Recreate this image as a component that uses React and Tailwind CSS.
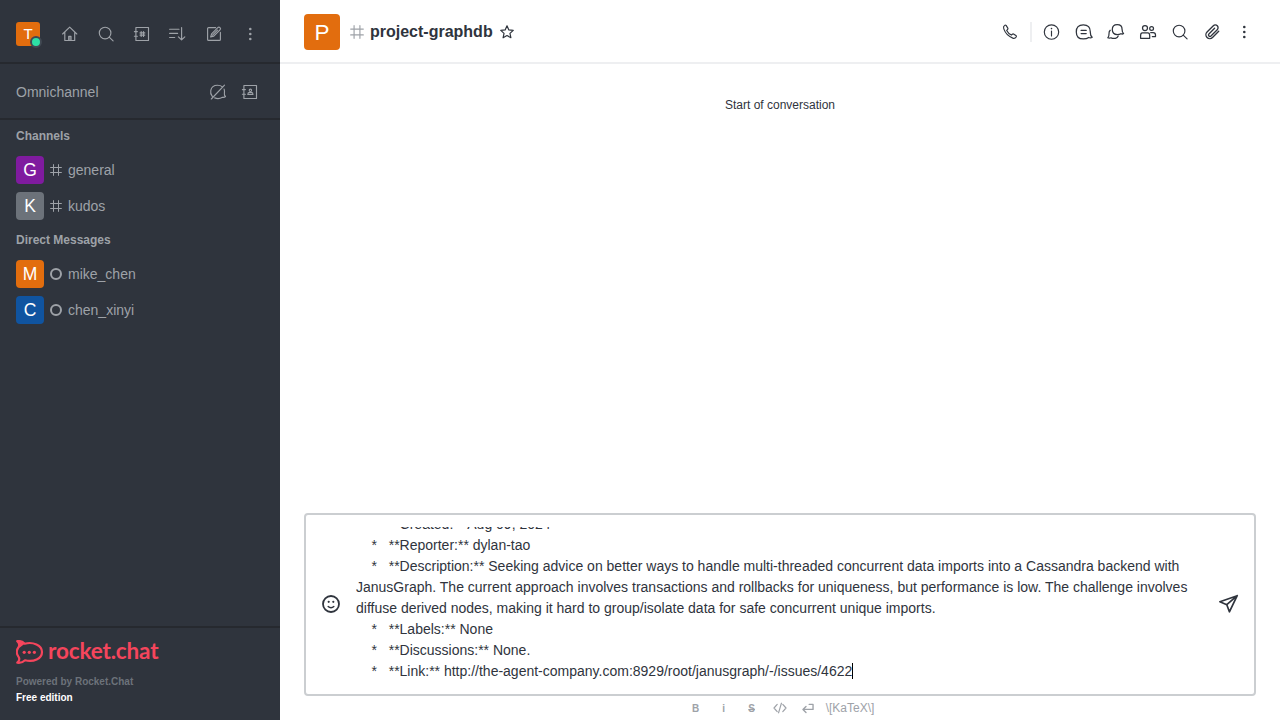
import React from 'react';

function Icon({ children, className = 'size-5', width = 1.15 }) {
  return (
    <svg viewBox="0 0 20 20" className={`${className} block shrink-0`} fill="none" stroke="currentColor" strokeWidth={width} strokeLinecap="round" strokeLinejoin="round">
      {children}
    </svg>
  );
}

const HomeIcon = () => (
  <Icon>
    <path d="M2.6 10 9.7 3.2l7.1 6.8M4.8 8.2v8.3h9.9V8.2" />
    <path d="M8.7 16.5v-4.2h2.3v4.2" />
    <path d="M9.4 12.5h1v4h-1z" fill="currentColor" stroke="none" />
  </Icon>
);
const SearchIcon = () => (
  <Icon>
    <circle cx="9.1" cy="9" r="5.8" />
    <path d="m13.2 13.1 3.9 3.8" />
  </Icon>
);
const DirectoryIcon = () => (
  <Icon>
    <path d="M3.9 3.5h12.600v13H3.900zM2.400 7.600h3M2.400 12.200h3" />
    <path d="M9.200 7.600v4.800M11.500 7.600v4.800M8 8.900h4.800M8 11.100h4.800" />
  </Icon>
);
const SortIcon = () => (
  <Icon>
    <path d="M1.6 5.2H11M1.6 9.4h8M1.6 13.5h5.1M13.6 3.6v12M10.4 12.8l3.2 3 3.2-3" />
  </Icon>
);
const EditIcon = () => (
  <Icon>
    <path d="M11.6 3.6h-7a1 1 0 0 0-1 1v10.8a1 1 0 0 0 1 1h10.8a1 1 0 0 0 1-1v-7" />
    <path d="m6.7 13 .9-3.2 6.2-6.1a1.35 1.35 0 0 1 2.2 2.2L9.800 12.100zM8.600 11.100l4.900-4.900" />
  </Icon>
);
const KebabIcon = () => (
  <Icon>
    <g fill="currentColor" stroke="none">
      <circle cx="10.3" cy="5" r="1.3" />
      <circle cx="10.3" cy="10" r="1.3" />
      <circle cx="10.3" cy="15" r="1.3" />
    </g>
  </Icon>
);
const BubbleOffIcon = () => (
  <Icon>
    <path d="M4.300 14.400A7 7 0 0 1 2.800 8.300C3.400 5 6 3.200 9.500 3.200c2 0 3.700.5 4.900 1.600M16.100 7.100c.6 1.600.6 3.400.3 4.700-.2 1 .1 1.800 1.100 2.700-.7.700-1.800 1-3 .8-2.300 1.300-5.300 1.600-7.800.6M3.300 17 16.500 3.200" />
  </Icon>
);
const ContactsIcon = () => (
  <Icon>
    <path d="M3.900 3.500h12.600v13H3.900zM2.400 7.600h3M2.400 12.200h3" />
    <circle cx="10.400" cy="8.300" r="1.200" strokeWidth="1.100" />
    <path d="M7.800 12.400c0-1.400.7-2 1.600-2h2c.9 0 1.600.6 1.600 2z" strokeWidth="1.100" />
  </Icon>
);
const HashIcon = ({ className }) => (
  <svg viewBox="0 0 12 12" className={`${className} block shrink-0`} fill="none" stroke="currentColor" strokeWidth="1" strokeLinecap="round">
    <path d="M3.500.6v10.800M8.500.6v10.800M.6 3.500h10.800M.6 8.500h10.800" />
  </svg>
);
const StarIcon = () => (
  <Icon className="size-4" width={1.5}>
    <path d="m10 2.300 2.300 5.100 5.500.6-4.100 3.700 1.200 5.500-4.900-2.800-4.900 2.800 1.200-5.500L2.200 8l5.500-.6z" />
  </Icon>
);
const PhoneIcon = () => (
  <Icon>
    <path d="M6.100 3.400c-.5-.5-1-.4-1.500 0-1.200.9-1.400 2-.8 3.500 1.500 4.300 4.700 7.500 9 9.200 1.500.5 2.600.1 3.400-1.100.4-.6.300-1.100-.3-1.500l-2-1.300c-.6-.4-1.100-.3-1.600.1l-.9.800C9.300 12 7.700 10.300 6.700 8.400l.9-.9c.4-.4.500-.9.200-1.400z" />
  </Icon>
);
const InfoIcon = () => (
  <Icon>
    <circle cx="9.500" cy="10" r="7.200" />
    <path d="M9.500 9v5" />
    <circle cx="9.500" cy="6.600" r=".8" fill="currentColor" stroke="none" />
  </Icon>
);
const ThreadIcon = () => (
  <Icon width={1.250}>
    <path d="M9.300 2.900c4.400 0 7 2.600 7 6.900 0 2.200-.2 3.900 1.900 5.400-1 .8-2.200.8-3.500.3-1.400 1-3.300 1.400-5.400 1.400-4.300 0-7-2.600-7-7s2.700-7 7-7z" />
    <path d="M7.100 8.400h5.100M7.100 11.600h5.100" />
  </Icon>
);
const DiscussionIcon = () => (
  <Icon width={1.250}>
    <path d="M11.200 2.700c3.200 0 4.900 1.800 4.900 4.800 0 1.800.1 3 1.500 4-.8.6-1.800.6-2.700.2-1 .6-2.200.9-3.700.9-3.100 0-4.900-1.900-4.900-5s1.800-4.900 4.900-4.900z" />
    <path d="M4.200 8.300c-1 1-1.300 2.200-1.200 3.600.1 1.600-.2 2.700-1.200 3.900 1.100.6 2.200.5 3.200 0 3 1.200 6.300.7 7.200-1.800" />
  </Icon>
);
const MembersIcon = () => (
  <Icon width={1.25}>
    <circle cx="7" cy="6.100" r="2.500" />
    <circle cx="13.600" cy="6.400" r="1.900" />
    <path d="M4.400 10.900h5.500c1.300 0 1.800 1.100 1.800 2.800v2.600H2.600v-2.600c0-1.700.5-2.800 1.800-2.800zM12.700 10.700h2.500c1.600 0 2.300.8 2.300 2.400v1.500h-3.200" />
  </Icon>
);
const ClipIcon = () => (
  <Icon width={1.350}>
    <path d="m16.700 9.300-6.200 6.200a3.850 3.850 0 0 1-5.450-5.450l6.300-6.300a2.750 2.750 0 0 1 3.900 3.900l-6.300 6.300a1.450 1.450 0 0 1-2.050-2.050l5.700-5.700" />
  </Icon>
);
const SmileIcon = () => (
  <Icon width={1.800}>
    <circle cx="10" cy="10" r="8" />
    <path d="M7.200 12.500c1.500 1.500 4.100 1.500 5.600 0" strokeWidth="1.500" />
    <circle cx="7.700" cy="7.800" r="1.100" fill="currentColor" stroke="none" />
    <circle cx="12.300" cy="7.800" r="1.100" fill="currentColor" stroke="none" />
  </Icon>
);
const SendIcon = () => (
  <Icon width={1.700}>
    <path d="M18.200 1.700.900 7.700l6.900 3 2.600 7.100zM7.800 10.700l10.400-9" />
  </Icon>
);

const avatarColors = {
  G: 'bg-[#7f1b9f]',
  K: 'bg-[#6c727a]',
  M: 'bg-[#e26d0e]',
  C: 'bg-[#1054a0]',
  T: 'bg-[#e26d0e]',
  P: 'bg-[#e26d0e]',
};

function Avatar({ letter, className }) {
  return (
    <svg viewBox="0 0 200 200" className={`${className} ${avatarColors[letter]} block shrink-0`}>
      <text x="100" y="100" dy="0.36em" textAnchor="middle" fontSize="125" fill="#fff">{letter}</text>
    </svg>
  );
}

function Room({ name, direct }) {
  return (
    <div className="flex h-9 items-center px-4">
      <Avatar letter={name[0].toUpperCase()} className="size-7 rounded-[4px]" />
      <span className="flex w-6 justify-center">
        {direct ? <span className="size-3 rounded-full border-2 border-current" /> : <HashIcon className="size-3" />}
      </span>
      <span className="leading-5">{name}</span>
    </div>
  );
}

function Sidebar() {
  return (
    <aside className="flex w-[280px] shrink-0 flex-col bg-[#2f343d] text-sm text-[#9ea2a8]">
      <div className="flex h-16 items-center border-b-2 border-[#26292f] pt-1.5 pl-4">
        <div className="relative">
          <Avatar letter="T" className="size-6 rounded-[3px]" />
          <span className="absolute -right-[2px] -bottom-[2px] size-3 rounded-full border-2 border-[#414852] bg-[#2de0a5]" />
        </div>
        <nav className="ml-5 flex gap-4">
          <HomeIcon /><SearchIcon /><DirectoryIcon /><SortIcon /><EditIcon /><KebabIcon />
        </nav>
      </div>
      <div className="flex h-14 items-center border-b-2 border-[#26292f] pt-0.5 pl-4">
        <span className="w-48">Omnichannel</span>
        <div className="flex gap-3"><BubbleOffIcon /><ContactsIcon /></div>
      </div>
      <div className="flex flex-1 flex-col">
        <h3 className="flex h-8 items-center px-4 text-xs font-bold">Channels</h3>
        <Room name="general" />
        <Room name="kudos" />
        <h3 className="flex h-8 items-center px-4 text-xs font-bold">Direct Messages</h3>
        <Room name="mike_chen" direct />
        <Room name="chen_xinyi" direct />
      </div>
      <footer className="h-[94px] border-t-2 border-[#26292f] px-4 pt-3">
        <div className="flex h-6 items-center gap-1 text-[#f5455c]">
          <svg viewBox="0 0 28 24" className="h-6 w-7" fill="none">
            <path d="M1.300 1.200c3.100-.4 5.700.5 7.400 2.500C17 1.500 26 5.200 26 12S17.500 22.400 9 20.300c-2 2-4.800 2.800-7.700 2.400 2.500-2.200 2.500-4.300 1-6.300-2-2.800-2-6 0-8.800 1.500-2.100 1.300-4.300-1-6.400z" stroke="currentColor" strokeWidth="2.200" strokeLinejoin="round" />
            <path d="M.3.400c4-.8 7 .4 8.700 3.200L3.200 8C4 5.300 3 2.800.3.400z" fill="currentColor" />
            <g fill="currentColor"><circle cx="8.200" cy="12.300" r="1.600" /><circle cx="13.300" cy="12.300" r="1.600" /><circle cx="18.400" cy="12.300" r="1.600" /></g>
          </svg>
          <span className="-mt-[3px] font-[Lato,sans-serif] text-[22.500px] leading-6 font-bold tracking-[-0.150px]">rocket.chat</span>
        </div>
        <p className="mt-[10px] text-[10px] leading-4 font-bold text-[#6c727a]">Powered by Rocket.Chat</p>
        <p className="text-[10px] leading-4 font-bold text-white">Free edition</p>
      </footer>
    </aside>
  );
}

const draft = `    *   **Created:** Aug 09, 2024
    *   **Reporter:** dylan-tao
    *   **Description:** Seeking advice on better ways to handle multi-threaded concurrent data imports into a Cassandra backend with JanusGraph. The current approach involves transactions and rollbacks for uniqueness, but performance is low. The challenge involves diffuse derived nodes, making it hard to group/isolate data for safe concurrent unique imports.
    *   **Labels:** None
    *   **Discussions:** None.
    *   **Link:** http://the-agent-company.com:8929/root/janusgraph/-/issues/4622`;

function Composer() {
  return (
    <div className="flex h-[183px] items-center rounded-[4px] border-2 border-[#cbced1] pl-[15px]">
      <div className="pb-0.5"><SmileIcon /></div>
      <div className="ml-[15px] flex h-[155px] w-[850px] flex-col justify-end overflow-hidden">
        <p className="w-[840px] text-sm leading-[21px] whitespace-pre-wrap">
          {draft}<span className="-mr-px inline-block h-4 w-px bg-black align-[-3px]" />
        </p>
      </div>
      <div className="ml-[13px] pb-0.5"><SendIcon /></div>
    </div>
  );
}

function FormatBar() {
  return (
    <div className="flex h-6 items-center justify-center pr-1 text-[#9ea2a8]">
      <span className="w-7 text-center text-[10px] font-bold">B</span>
      <span className="w-7 text-center text-[10px] font-bold">i</span>
      <span className="w-7 text-center text-[10px] font-bold"><s className="px-px">S</s></span>
      <span className="flex w-7 justify-center">
        <Icon className="size-4" width={1.500}><path d="m6.500 5.500-4 4.500 4 4.500M13.500 5.500l4 4.500-4 4.500M11.800 4 8.200 16" /></Icon>
      </span>
      <span className="flex w-7 justify-center">
        <Icon className="size-4" width={1.700}><path d="M11.500 5.500h4.800v6.300H4M7.500 8 3.700 11.800l3.800 3.800" /></Icon>
      </span>
      <span className="ml-1 text-xs">\[KaTeX\]</span>
    </div>
  );
}

export default function App() {
  return (
    <div className="flex h-[720px] w-[1280px] overflow-hidden bg-white font-['Liberation_Sans',Arial,sans-serif] text-[#2f343d]">
      <Sidebar />
      <main className="flex min-w-0 flex-1 flex-col">
        <header className="flex h-16 items-center border-b-2 border-[#eeeff1] px-6 pt-0.5">
          <Avatar letter="P" className="size-9 rounded-[4px]" />
          <span className="ml-[10px] text-[#9ea2a8]"><HashIcon className="size-[14px]" /></span>
          <h1 className="ml-[6px] text-base font-bold">project-graphdb</h1>
          <span className="ml-[6px]"><StarIcon /></span>
          <div className="ml-auto flex items-center gap-3 pr-0.5">
            <PhoneIcon />
            <div className="-mx-[2px] h-5 w-0.5 bg-[#eeeff1]" />
            <InfoIcon /><ThreadIcon /><DiscussionIcon /><MembersIcon /><SearchIcon /><ClipIcon /><KebabIcon />
          </div>
        </header>
        <section className="flex-1 pt-8 text-center text-xs leading-[18px]">Start of conversation</section>
        <div className="px-6">
          <Composer />
          <FormatBar />
        </div>
      </main>
    </div>
  );
}
